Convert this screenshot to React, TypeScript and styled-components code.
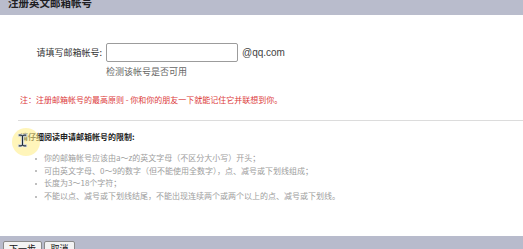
import React from "react";
import styled, { createGlobalStyle } from "styled-components";

const GlobalStyle = createGlobalStyle`
  html, body {
    margin: 0;
    padding: 0;
    background: #ffffff;
  }
  body {
    font-family: "Noto Sans CJK SC", "Liberation Sans", sans-serif;
    color: #333;
  }
`;

const rules = [
  "你的邮箱帐号应该由a～z的英文字母（不区分大小写）开头；",
  "可由英文字母、0～9的数字（但不能使用全数字），点、减号或下划线组成；",
  "长度为3～18个字符；",
  "不能以点、减号或下划线结尾，不能出现连续两个或两个以上的点、减号或下划线。",
];

export default function App() {
  return (
    <>
      <GlobalStyle />
      <Page>
        <Header>
          <Title>注册英文邮箱帐号</Title>
        </Header>
        <Body>
          <FormRow>
            <Label>请填写邮箱帐号:</Label>
            <Input type="text" />
            <Domain>@qq.com</Domain>
          </FormRow>
          <CheckLink>检测该帐号是否可用</CheckLink>
          <Note>注：注册邮箱帐号的最高原则 - 你和你的朋友一下就能记住它并联想到你。</Note>
          <Divider />
          <Heading>请仔细阅读申请邮箱帐号的限制:</Heading>
          <RuleList>
            {rules.map((r) => (
              <RuleItem key={r}>{r}</RuleItem>
            ))}
          </RuleList>
          <CursorHalo />
          <Cursor width="11" height="15" viewBox="0 0 10 14">
            <path
              d="M1 1h3l1 1 1-1h3v2H6v8h3v2H6l-1-1-1 1H1v-2h3V3H1z"
              fill="#1d2a36"
              stroke="#e8eef4"
              strokeWidth="0.8"
            />
          </Cursor>
        </Body>
        <Footer>
          <Button $wide>下一步</Button>
          <Button>取消</Button>
        </Footer>
      </Page>
    </>
  );
}

const Page = styled.div`
  display: flex;
  flex-direction: column;
  width: 523px;
  height: 249px;
  overflow: hidden;
`;

const Header = styled.div`
  flex: 0 0 15px;
  background: #b9bccc;
  overflow: hidden;
  padding-left: 8px;
`;

const Title = styled.div`
  font-size: 10.5px;
  font-weight: bold;
  line-height: 11px;
  margin-top: -3px;
  color: #1f1f24;
`;

const Body = styled.div`
  position: relative;
  flex: 1;
  background: #fff;
  display: flex;
  flex-direction: column;
`;

const FormRow = styled.div`
  display: flex;
  align-items: center;
  margin-top: 28px;
  height: 19px;
`;

const Label = styled.div`
  width: 106px;
  text-align: right;
  font-size: 9px;
  color: #333;
  padding-right: 4px;
  box-sizing: border-box;
`;

const Input = styled.input`
  width: 132px;
  height: 19px;
  box-sizing: border-box;
  border: 1px solid #9c9c9c;
  border-radius: 2px;
  padding: 0 3px;
  margin: 0;
  outline: none;
  background: #fff;
`;

const Domain = styled.span`
  margin-left: 4px;
  font-family: "Liberation Sans", Arial, sans-serif;
  font-size: 10px;
  color: #444;
`;

const CheckLink = styled.div`
  margin-top: 4px;
  margin-left: 106px;
  font-size: 9px;
  line-height: 11px;
  color: #666;
`;

const Note = styled.div`
  margin-top: 18px;
  margin-left: 20px;
  font-size: 8px;
  line-height: 10px;
  color: #dc3b3b;
  white-space: nowrap;
`;

const Divider = styled.div`
  margin-top: 15px;
  margin-left: 18px;
  height: 1px;
  background: #dcdcdc;
`;

const Heading = styled.div`
  margin-top: 11px;
  margin-left: 20px;
  font-size: 8px;
  font-weight: bold;
  line-height: 10px;
  color: #222;
`;

const RuleList = styled.ul`
  list-style: none;
  margin: 10px 0 0 0;
  padding: 0 0 0 44px;
`;

const RuleItem = styled.li`
  position: relative;
  font-size: 8px;
  line-height: 12.7px;
  color: #9d9d9d;
  white-space: nowrap;

  &::before {
    content: "";
    position: absolute;
    left: -9px;
    top: 5.5px;
    width: 2px;
    height: 2px;
    border-radius: 50%;
    background: #aaa;
  }
`;

const CursorHalo = styled.div`
  position: absolute;
  left: 12px;
  top: 113px;
  width: 28px;
  height: 28px;
  border-radius: 50%;
  background: rgba(255, 238, 140, 0.6);
  pointer-events: none;
`;

const Cursor = styled.svg`
  position: absolute;
  left: 17px;
  top: 118px;
  pointer-events: none;
`;

const Footer = styled.div`
  flex: 0 0 13px;
  box-sizing: border-box;
  background: #b8bbcc;
  display: flex;
  align-items: flex-start;
  gap: 2px;
  padding: 5px 0 0 3px;
  overflow: hidden;
`;

const Button = styled.button<{ $wide?: boolean }>`
  flex: 0 0 auto;
  width: ${(p) => (p.$wide ? "39px" : "31px")};
  height: 16px;
  padding: 0;
  margin: 0;
  border: 1px solid #8a8a8a;
  border-radius: 2px;
  background: #f3f3f3;
  font-family: "Noto Sans CJK SC", sans-serif;
  font-size: 9px;
  line-height: 12px;
  color: #111;
`;
